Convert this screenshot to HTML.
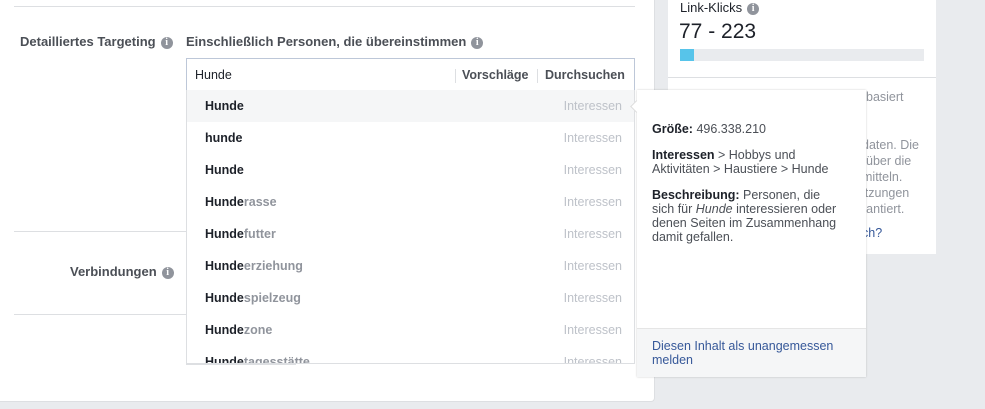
<!DOCTYPE html>
<html><head><meta charset="utf-8"><style>
*{margin:0;padding:0;box-sizing:border-box}
body{width:985px;height:409px;background:#e9ebee;font-family:"Liberation Sans",Arial,sans-serif;position:relative;overflow:hidden;color:#1d2129}
.abs{position:absolute}
.info{display:inline-block;width:12px;height:12px;border-radius:50%;background:#90949c;color:#fff;font-size:10px;font-weight:bold;text-align:center;line-height:12px;font-family:"Liberation Serif",serif;vertical-align:1px;margin-left:5px}
.lbl{font-size:13px;font-weight:bold;color:#4b4f56}
.row{position:absolute;left:0;width:447px;height:32px;font-size:12.5px;line-height:32px}
.row b{position:absolute;left:18px;color:#1d2129}
.row b span{color:#90949c}
.row i{position:absolute;right:12px;font-style:normal;color:#bec2c9;font-size:12.5px}
.rt{font-size:12.5px;color:#90949c;position:absolute;left:853px}
</style></head><body>
<div class="abs" style="left:0;top:0;width:655px;height:402px;background:#fff;border:1px solid #dddfe2;border-top:none;border-left:none;border-radius:0 0 4px 0"></div>
<div class="abs" style="left:14px;top:6px;width:621px;height:1px;background:#dddfe2"></div>
<div class="abs lbl" style="left:20px;top:34px">Detailliertes Targeting<span class="info">i</span></div>
<div class="abs lbl" style="left:186px;top:34px">Einschließlich Personen, die übereinstimmen<span class="info">i</span></div>
<div class="abs" style="left:14px;top:231px;width:172px;height:1px;background:#dddfe2"></div>
<div class="abs" style="left:14px;top:314px;width:172px;height:1px;background:#dddfe2"></div>
<div class="abs lbl" style="left:70px;top:264px">Verbindungen<span class="info">i</span></div>
<div class="abs" style="left:186px;top:117px;width:2px;height:12px;background:#e9a9a9"></div>
<div class="abs" style="left:186px;top:191px;width:2px;height:12px;background:#e9a9a9"></div>
<div class="abs" style="left:186px;top:362px;width:110px;height:3px;background:#dddfe2"></div>
<div class="abs" style="left:186px;top:58px;width:449px;height:33px;border:1px solid #bdc7d8;background:#fff">
 <div class="abs" style="left:8px;top:9px;font-size:12.5px">Hunde</div>
 <div class="abs" style="left:268px;top:10px;width:1px;height:14px;background:#dddfe2"></div>
 <div class="abs" style="left:275px;top:9px;font-size:12.5px;font-weight:bold;color:#4b4f56">Vorschläge</div>
 <div class="abs" style="left:350px;top:10px;width:1px;height:14px;background:#dddfe2"></div>
 <div class="abs" style="left:358px;top:9px;font-size:12.5px;font-weight:bold;color:#4b4f56">Durchsuchen</div>
</div>
<div class="abs" style="left:186px;top:90px;width:449px;height:274px;background:#fff;border:1px solid #dddfe2;border-top:none;overflow:hidden">
 <div class="row" style="top:0;background:#f5f6f7"><b>Hunde</b><i>Interessen</i></div>
 <div class="row" style="top:32px"><b>hunde</b><i>Interessen</i></div>
 <div class="row" style="top:64px"><b>Hunde</b><i>Interessen</i></div>
 <div class="row" style="top:96px"><b>Hunde<span>rasse</span></b><i>Interessen</i></div>
 <div class="row" style="top:128px"><b>Hunde<span>futter</span></b><i>Interessen</i></div>
 <div class="row" style="top:160px"><b>Hunde<span>erziehung</span></b><i>Interessen</i></div>
 <div class="row" style="top:192px"><b>Hunde<span>spielzeug</span></b><i>Interessen</i></div>
 <div class="row" style="top:224px"><b>Hunde<span>zone</span></b><i>Interessen</i></div>
 <div class="row" style="top:256px"><b>Hunde<span>tagesstätte</span></b><i>Interessen</i></div>
</div>
<div class="abs" style="left:668px;top:0;width:268px;height:254px;background:#fff"></div>
<div class="abs" style="left:668px;top:77px;width:268px;height:1px;background:#dddfe2"></div>
<div class="abs" style="left:680px;top:0;font-size:13px;color:#1d2129">Link-Klicks<span class="info">i</span></div>
<div class="abs" style="left:679px;top:20px;font-size:21px;color:#1d2129">77 - 223</div>
<div class="abs" style="left:680px;top:49px;width:244px;height:12px;background:#e9ebee"></div>
<div class="abs" style="left:680px;top:49px;width:14px;height:12px;background:#57c4ea"></div>
<div class="rt" style="top:90px;left:866px">basiert</div>
<div class="rt" style="top:138px;left:862px">daten. Die</div>
<div class="rt" style="top:154px;left:866px">über die</div>
<div class="rt" style="top:170px;left:862px">mitteln.</div>
<div class="rt" style="top:186px;left:862px">itzungen</div>
<div class="rt" style="top:202px;left:862px">rantiert.</div>
<div class="rt" style="top:226px;left:862px;color:#365899">ch?</div>
<div class="abs" style="left:637px;top:90px;width:229px;height:287px;background:#fff;box-shadow:0 0 2px rgba(0,0,0,.2)">
 <div class="abs" style="left:-5px;top:12px;width:9px;height:9px;background:#fff;transform:rotate(45deg);border-left:1px solid #ddd;border-bottom:1px solid #ddd"></div>
 <div class="abs" style="left:15px;top:32px;width:190px;font-size:12.5px;line-height:14px;color:#4b4f56">
  <div><b style="color:#1d2129">Größe:</b> 496.338.210</div>
  <div style="margin-top:12px"><b style="color:#1d2129">Interessen</b> &gt; Hobbys und Aktivitäten &gt; Haustiere &gt; Hunde</div>
  <div style="margin-top:12px"><b style="color:#1d2129">Beschreibung:</b> Personen, die sich für <i>Hunde</i> interessieren oder denen Seiten im Zusammenhang damit gefallen.</div>
 </div>
 <div class="abs" style="left:0;top:238px;width:229px;height:49px;background:#f5f6f7;border-top:1px solid #e5e5e5">
  <div class="abs" style="left:15px;top:10px;width:200px;font-size:12.5px;line-height:14px;color:#365899">Diesen Inhalt als unangemessen melden</div>
 </div>
</div>
</body></html>
